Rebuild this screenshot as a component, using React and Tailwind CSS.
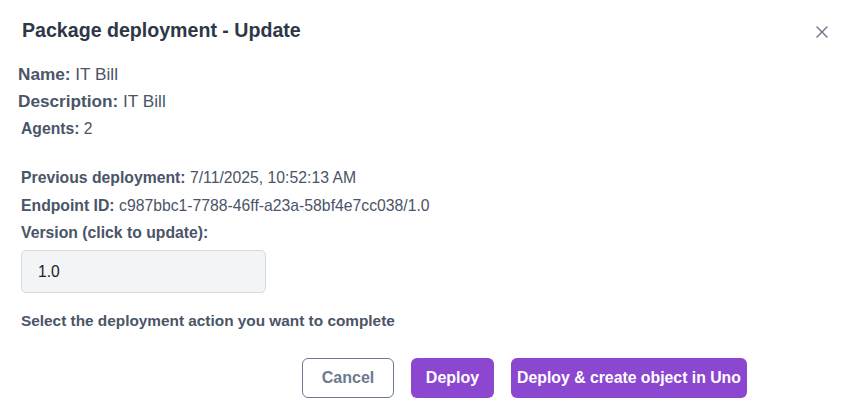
import React from "react";

function Field({ label, value, className = "" }) {
  return (
    <p className={className}>
      <span className="font-bold">{label}</span> {value}
    </p>
  );
}

export default function App() {
  return (
    <div
      className="w-[847px] h-[420px] bg-white text-[#4a5568] relative overflow-hidden"
      style={{ fontFamily: '"Liberation Sans", Arial, sans-serif' }}
    >
      {/* header */}
      <div className="pl-[22px] pt-[15px] h-[45px]">
        <h2 className="text-[19.6px] leading-[30px] font-bold text-[#2d3748]">
          Package deployment - Update
        </h2>
      </div>
      <button className="absolute top-[20px] right-[13px] w-6 h-6 flex items-center justify-center text-[#6b7280]">
        <svg width="12" height="12" viewBox="0 0 12 12" fill="none" stroke="currentColor" strokeWidth="1.4" strokeLinecap="round">
          <path d="M1 1L11 11M11 1L1 11" />
        </svg>
      </button>

      {/* body */}
      <div className="pl-[18px] pt-[15.5px]">
        <Field label="Name:" value="IT Bill" className="text-[17.2px] leading-[27px]" />
        <Field label="Description:" value="IT Bill" className="text-[17.2px] leading-[27px]" />
        <Field label="Agents:" value="2" className="ml-[3px] mt-[2.5px] text-[15.7px] leading-6" />

        <div className="ml-[3px] mt-[25px] text-[15.75px] leading-6 flex flex-col gap-1">
          <Field label="Previous deployment:" value="7/11/2025, 10:52:13 AM" />
          <Field label="Endpoint ID:" value="c987bbc1-7788-46ff-a23a-58bf4e7cc038/1.0" />
          <p className="font-bold -mt-[1px]">Version (click to update):</p>
        </div>

        <div className="ml-[3px] mt-[5px] w-[245px] h-[43px] rounded-[5px] border border-[#d5d8dd] bg-[#f3f4f6] flex items-center pl-4 text-[15.6px] text-[#1a202c]">
          1.0
        </div>

        <p className="ml-[3px] mt-[16px] text-[15.36px] leading-6 font-bold">
          Select the deployment action you want to complete
        </p>
      </div>

      {/* footer */}
      <div className="flex justify-end gap-[17px] pr-[100px] mt-[25px]">
        <button className="w-[92px] h-[40px] rounded-[6px] border border-[#6b7a90] text-[#6b7a90] font-bold text-[16px]">
          Cancel
        </button>
        <button className="w-[83px] h-[40px] rounded-[6px] bg-[#8c47d0] text-white font-bold text-[16px]">
          Deploy
        </button>
        <button className="w-[236px] h-[40px] rounded-[6px] bg-[#8c47d0] text-white font-bold text-[15.8px]">
          Deploy &amp; create object in Uno
        </button>
      </div>
    </div>
  );
}
